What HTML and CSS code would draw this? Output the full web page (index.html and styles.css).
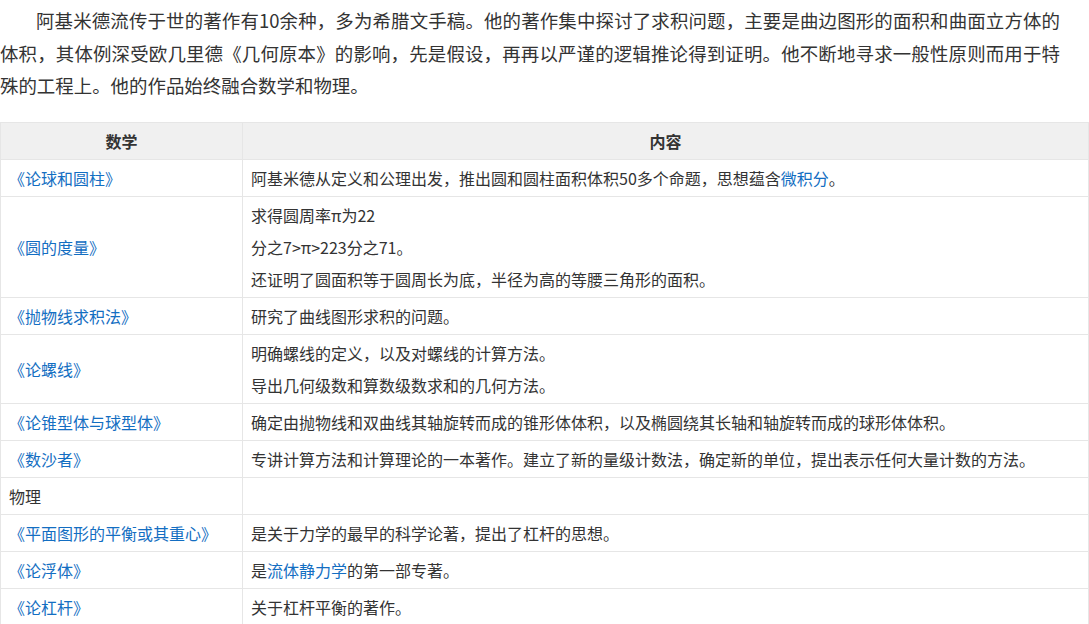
FILE: index.html
```html
<!DOCTYPE html>
<html lang="zh-CN">
<head>
<meta charset="utf-8">
<title>阿基米德的著作</title>
<link rel="stylesheet" href="styles.css">
</head>
<body>
<div class="page">
  <p class="intro">阿基米德流传于世的著作有10余种，多为希腊文手稿。他的著作集中探讨了求积问题，主要是曲边图形的面积和曲面立方体的体积，其体例深受欧几里德《几何原本》的影响，先是假设，再再以严谨的逻辑推论得到证明。他不断地寻求一般性原则而用于特殊的工程上。他的作品始终融合数学和物理。</p>
  <table class="works">
    <colgroup>
      <col class="col-title">
      <col class="col-content">
    </colgroup>
    <thead>
      <tr><th>数学</th><th>内容</th></tr>
    </thead>
    <tbody>
      <tr>
        <td><a class="link" href="#">《论球和圆柱》</a></td>
        <td><div class="line">阿基米德从定义和公理出发，推出圆和圆柱面积体积50多个命题，思想蕴含<a class="link" href="#">微积分</a>。</div></td>
      </tr>
      <tr>
        <td><a class="link" href="#">《圆的度量》</a></td>
        <td>
          <div class="line">求得圆周率π为22</div>
          <div class="line">分之7&gt;π&gt;223分之71。</div>
          <div class="line">还证明了圆面积等于圆周长为底，半径为高的等腰三角形的面积。</div>
        </td>
      </tr>
      <tr>
        <td><a class="link" href="#">《抛物线求积法》</a></td>
        <td><div class="line">研究了曲线图形求积的问题。</div></td>
      </tr>
      <tr>
        <td><a class="link" href="#">《论螺线》</a></td>
        <td>
          <div class="line">明确螺线的定义，以及对螺线的计算方法。</div>
          <div class="line">导出几何级数和算数级数求和的几何方法。</div>
        </td>
      </tr>
      <tr>
        <td><a class="link" href="#">《论锥型体与球型体》</a></td>
        <td><div class="line">确定由抛物线和双曲线其轴旋转而成的锥形体体积，以及椭圆绕其长轴和轴旋转而成的球形体体积。</div></td>
      </tr>
      <tr>
        <td><a class="link" href="#">《数沙者》</a></td>
        <td><div class="line">专讲计算方法和计算理论的一本著作。建立了新的量级计数法，确定新的单位，提出表示任何大量计数的方法。</div></td>
      </tr>
      <tr>
        <td><div class="line">物理</div></td>
        <td><div class="line"></div></td>
      </tr>
      <tr>
        <td><a class="link" href="#">《平面图形的平衡或其重心》</a></td>
        <td><div class="line">是关于力学的最早的科学论著，提出了杠杆的思想。</div></td>
      </tr>
      <tr>
        <td><a class="link" href="#">《论浮体》</a></td>
        <td><div class="line">是<a class="link" href="#">流体静力学</a>的第一部专著。</div></td>
      </tr>
      <tr>
        <td><a class="link" href="#">《论杠杆》</a></td>
        <td><div class="line">关于杠杆平衡的著作。</div></td>
      </tr>
    </tbody>
  </table>
</div>
</body>
</html>
```

FILE: styles.css
```css
html, body {
  margin: 0;
  padding: 0;
  background: #ffffff;
}

body {
  font-family: "Noto Sans CJK SC", "Noto Sans", sans-serif;
  color: #333333;
}

.page {
  width: 1089px;
  padding-top: 4px;
}

.intro {
  margin: 0 0 20px 0;
  width: 1060px;
  font-size: 18.45px;
  line-height: 32.5px;
  text-indent: 36px;
  text-align: justify;
  color: #333333;
}

.works {
  width: 1089px;
  border-collapse: collapse;
  table-layout: fixed;
  font-size: 16px;
  color: #333333;
}

.col-title {
  width: 242px;
}

.works th,
.works td {
  border: 1px solid #e6e6e6;
  padding: 5px 8px;
  line-height: 26px;
  vertical-align: middle;
  text-align: left;
}

.works th {
  background: #f0f0f0;
  font-weight: bold;
  text-align: center;
  color: #333333;
}

.line {
  min-height: 26px;
}

.line + .line {
  margin-top: 6px;
}

.link {
  color: #136ec2;
  text-decoration: none;
}
```
